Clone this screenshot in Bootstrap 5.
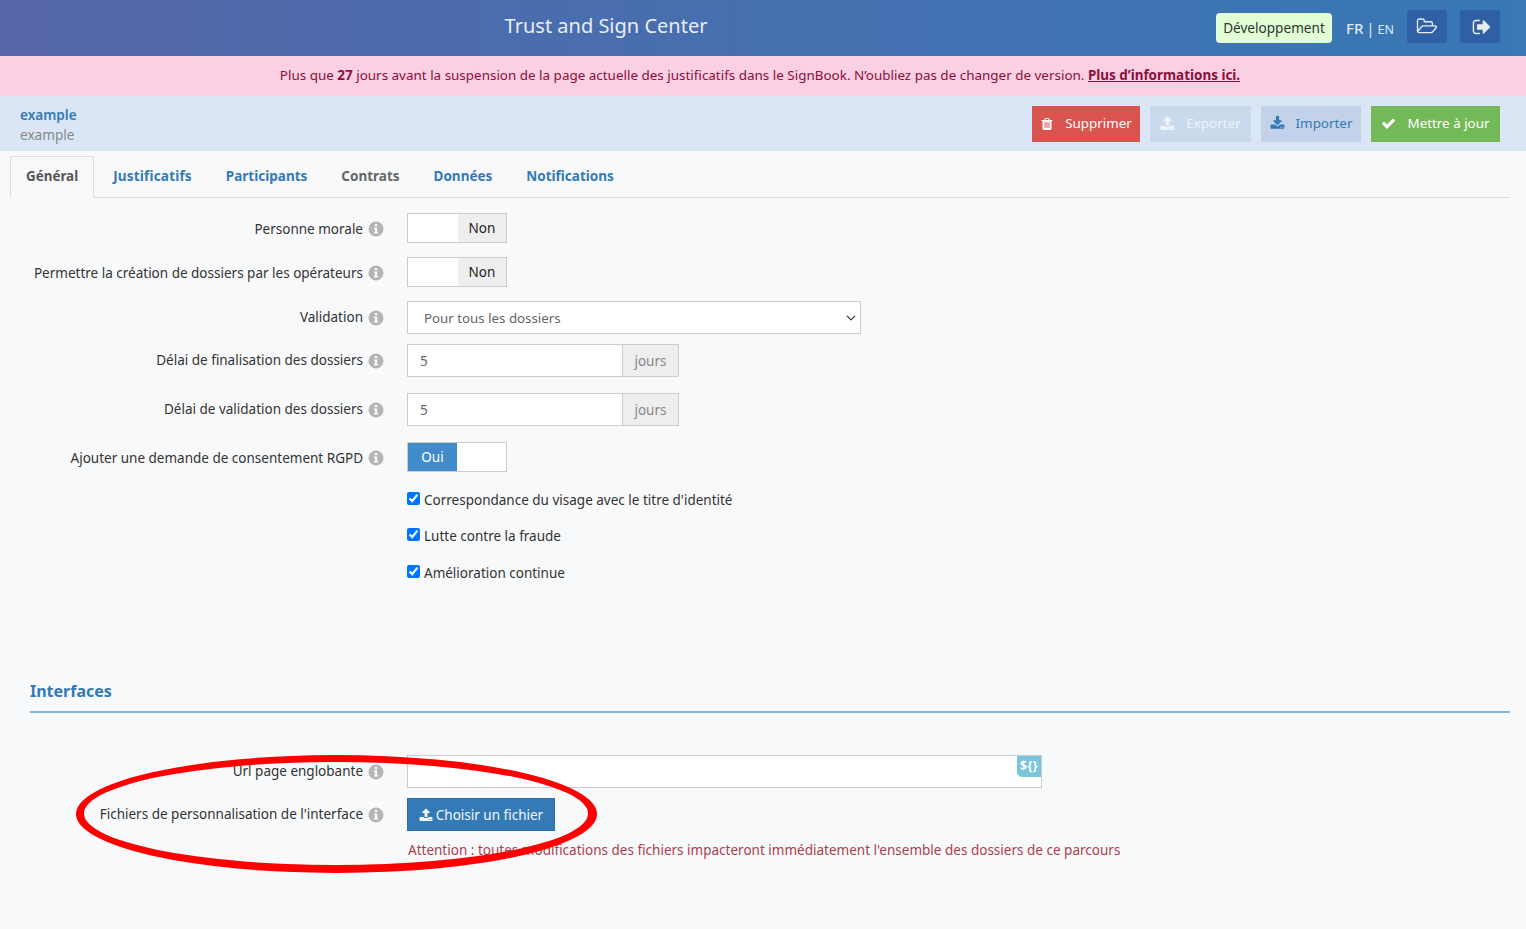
<!DOCTYPE html>
<html lang="fr"><head><meta charset="utf-8"><title>Trust and Sign Center</title>
<link rel="stylesheet" href="https://cdn.jsdelivr.net/npm/bootstrap@5.3.0/dist/css/bootstrap.min.css">
<style>
html,body{height:100%}
body{font-family:"Noto Sans",sans-serif;font-size:13.5px;background:#f8f9fb;color:#333;position:relative;overflow:hidden;display:flex;flex-direction:column}
.ic{fill:currentColor;display:inline-block;flex:none}
.top-bar{height:56px;flex:none;background:linear-gradient(90deg,#5566a9,#3778b5);color:#e8eef6}
.top-title{font-size:20px;padding-bottom:4px}
.top-right{width:314px;padding-right:26px;padding-left:4px}
.env-tag{background:#e0ffd4;color:#333;border-radius:4px;height:30px;line-height:30px;width:116px;text-align:center;font-size:13.6px;margin-right:14px;white-space:nowrap}
.lang{color:#dfe9f5;font-size:15px;width:61px;white-space:nowrap;word-spacing:-1px}
.lang small{font-size:12.5px;margin-left:0}
.top-btn,.top-btn:hover{width:40px;height:33px;background:#2f5fa5;border-radius:3px;color:#e8eef6;border:0;padding:0 0 3px;margin-top:-3px}
.top-btn.out{padding-left:4px}
.warn-bar{height:40px;flex:none;background:#fcd0e3;color:#8b0f3c;font-size:13.44px;padding:0 6px 2px 0}
.warn-bar a{color:#8b0f3c;font-weight:700}
.sub-bar{height:55px;flex:none;background:#dae6f6;padding:0 26px 0 20px}
.sub-names{padding-top:2px}
.sub-name{color:#337ab7;font-weight:600;font-size:13.6px;line-height:20px}
.sub-code{color:#888;font-size:13.6px;line-height:20px}
.act{height:36px;border-radius:0;border:0;font-size:13.4px;padding:0;display:flex;align-items:center;justify-content:center;gap:11px}
.act-group{gap:10px}
.act-del,.act-del:hover{background:#d9534f;width:108px;color:#fff}
.act-exp,.act-exp:hover{background:#cad9ec;width:101px;color:#eef3f9}
.act-imp,.act-imp:hover{background:#c2d3e9;width:100px;color:#337ab7}
.act-ok,.act-ok:hover{background:#74b957;width:129px;color:#fff}
.tabs-zone{margin:5px 16px 0 10px;flex:none}
.tabs-zone .nav-tabs{border-bottom:1px solid #ddd;--bs-nav-tabs-border-radius:2px;height:42px}
.tabs-zone .nav-link{font-weight:700;color:#337ab7;padding:9px 16px;height:42px;font-size:13.5px;border-width:1px;margin-right:0;line-height:20px}
.tabs-zone .nav-link.wide{letter-spacing:.2px}
.tabs-zone .nav-link.dim{color:#666}
.tabs-zone .nav-link.active{color:#555;background:#f8f9fb;border-color:#ddd #ddd #f8f9fb;padding:9px 15px;margin-right:2px;font-size:13.4px}
.form-zone{padding-top:15px;flex:1 1 auto}
.f-row{display:grid;grid-template-columns:383px 1fr;column-gap:24px;align-items:center}
.f-lab{display:flex;justify-content:flex-end;align-items:center;gap:5px;color:#333;margin-right:-1px}
.f-lab.low{padding-top:2px}
.i-dot{width:16px;height:16px;color:#b5b5b5}
.tog{width:100px;height:30px;border:1px solid #ccc;display:flex;background:#fff}
.tog span{flex:1;display:flex;align-items:center;justify-content:center}
.tog .off{flex:none;width:48px;background:#eee;color:#222}
.tog .on{flex:none;width:49px;background:#428bca;color:#fff}
.f-sel{width:454px;height:33px;padding:2px 16px 0;border:1px solid #ccc;border-radius:0;font-size:13.3px;color:#666;background-position:right 4px center;background-size:10px 10px}
.f-inp{width:272px;border-radius:0}
.f-inp .form-control{height:33px;border-radius:0;border-color:#ccc;color:#666;font-size:13.5px;padding:0 12px}
.f-inp .input-group-text{border-radius:0;border-color:#ccc;background:#eee;color:#888;font-size:13.5px;width:57px;justify-content:center;padding:2px 0 0}
.f-chk{margin:0;padding:0;display:flex;align-items:flex-start;gap:4px;color:#333;line-height:20px}
.f-chk input{margin:2px 0 0;width:13px;height:13px;flex:none;accent-color:#0075ff}
.sec-title{margin:0 16px 0 30px;height:32px;border-bottom:2px solid #8ab4d6;color:#337ab7;font-size:16px;font-weight:700;line-height:20px}
.url-box{width:635px;height:33px;border:1px solid #ccc;background:#fff;position:relative}
.var-tag{position:absolute;top:0;right:0;width:24px;height:21px;background:#79c5de;color:#fff;font-size:12px;letter-spacing:.5px;font-weight:700;border-radius:0 0 0 5px;text-align:center;line-height:20px}
.up-btn,.up-btn:hover{width:148px;height:33px;background:#337ab7;color:#f2f6fa;border:1px solid #2e6da4;border-radius:0;padding:1px 0 0;font-size:13.5px;display:flex;align-items:center;justify-content:center;gap:3px}
.note{color:#ab3f4a;font-size:13.53px;line-height:20px;padding-left:1px}
.foot-band{height:27px;flex:none;background:#fafafa}
.ring{position:absolute;left:76px;top:753px;pointer-events:none}
</style></head><body>
<header class="top-bar d-flex align-items-center">
  <div class="flex-grow-1 text-center top-title">Trust and Sign Center</div>
  <div class="top-right d-flex align-items-center">
    <span class="env-tag">Développement</span>
    <span class="lang"><b class="fw-medium">FR</b> | <small>EN</small></span>
    <button class="btn top-btn me-auto" type="button" aria-label="Dossiers"><svg class="ic" width="22" height="19" viewBox="0 0 2048 1792"><path d="M1845 931q0-35-53-35h-1088q-40 0-85.500 21.500t-71.500 52.500l-294 363q-18 24-18 40 0 35 53 35h1088q40 0 86-22t71-53l294-363q18-22 18-40zm-1141-163h768v-160q0-40-28-68t-68-28h-576q-40 0-68-28t-28-68v-64q0-40-28-68t-68-28h-320q-40 0-68 28t-28 68v853l256-315q44-53 116-87.500t140-34.500zm1269 163q0 62-46 120l-295 363q-43 53-116 87.500t-140 34.500h-1088q-92 0-158-66t-66-158v-960q0-92 66-158t158-66h320q92 0 158 66t66 158v32h544q92 0 158 66t66 158v160h192q54 0 99 24.500t67 70.500q15 32 15 68z"/></svg></button>
    <button class="btn top-btn out" type="button" aria-label="Déconnexion"><svg class="ic" width="20" height="20" viewBox="0 0 1792 1792"><path d="M704 1440q0 4 1 20t.5 26.500-3 23.500-10 19.500-20.500 6.500h-320q-119 0-203.500-84.500t-84.500-203.500v-704q0-119 84.500-203.500t203.500-84.500h320q13 0 22.500 9.500t9.500 22.500q0 4 1 20t.5 26.500-3 23.500-10 19.500-20.500 6.500h-320q-66 0-113 47t-47 113v704q0 66 47 113t113 47h312l11.500 1 11.500 3 8 5.500 7 9 2 13.500zm928-544q0 26-19 45l-544 544q-19 19-45 19t-45-19-19-45v-288h-448q-26 0-45-19t-19-45v-384q0-26 19-45t45-19h448v-288q0-26 19-45t45-19 45 19l544 544q19 19 19 45z"/></svg></button>
  </div>
</header>
<div class="warn-bar d-flex align-items-center justify-content-center"><span>Plus que <b>27</b> jours avant la suspension de la page actuelle des justificatifs dans le SignBook. N’oubliez pas de changer de version. <a href="#">Plus d’informations ici.</a></span></div>
<div class="sub-bar d-flex align-items-center justify-content-between">
  <div class="sub-names"><div class="sub-name">example</div><div class="sub-code">example</div></div>
  <div class="d-flex act-group">
    <button class="btn act act-del" type="button"><svg class="ic" width="14" height="14" viewBox="0 0 1792 1792"><path d="M704 1376v-704q0-14-9-23t-23-9h-64q-14 0-23 9t-9 23v704q0 14 9 23t23 9h64q14 0 23-9t9-23zm256 0v-704q0-14-9-23t-23-9h-64q-14 0-23 9t-9 23v704q0 14 9 23t23 9h64q14 0 23-9t9-23zm256 0v-704q0-14-9-23t-23-9h-64q-14 0-23 9t-9 23v704q0 14 9 23t23 9h64q14 0 23-9t9-23zm-544-992h448l-48-117q-7-9-17-11h-317q-10 2-17 11zm928 32v64q0 14-9 23t-23 9h-96v948q0 83-47 143.500t-113 60.500h-832q-66 0-113-58.500t-47-141.500v-952h-96q-14 0-23-9t-9-23v-64q0-14 9-23t23-9h309l70-167q15-37 54-63t79-26h320q40 0 79 26t54 63l70 167h309q14 0 23 9t9 23z"/></svg>Supprimer</button>
    <button class="btn act act-exp" type="button"><svg class="ic" width="15" height="15" viewBox="0 0 1792 1792"><path d="M1344 1472q0-26-19-45t-45-19-45 19-19 45 19 45 45 19 45-19 19-45zm256 0q0-26-19-45t-45-19-45 19-19 45 19 45 45 19 45-19 19-45zm128-224v320q0 40-28 68t-68 28h-1472q-40 0-68-28t-28-68v-320q0-40 28-68t68-28h427q21 56 70.500 92t110.500 36h256q61 0 110.500-36t70.500-92h427q40 0 68 28t28 68zm-325-648q-17 40-59 40h-256v448q0 26-19 45t-45 19h-256q-26 0-45-19t-19-45v-448h-256q-42 0-59-40-17-39 14-69l448-448q18-19 45-19t45 19l448 448q31 30 14 69z"/></svg>Exporter</button>
    <button class="btn act act-imp" type="button"><svg class="ic" width="15" height="15" viewBox="0 0 1792 1792"><path d="M1344 1344q0-26-19-45t-45-19-45 19-19 45 19 45 45 19 45-19 19-45zm256 0q0-26-19-45t-45-19-45 19-19 45 19 45 45 19 45-19 19-45zm128-224v320q0 40-28 68t-68 28h-1472q-40 0-68-28t-28-68v-320q0-40 28-68t68-28h465l135 136q58 56 136 56t136-56l136-136h464q40 0 68 28t28 68zm-325-569q17 41-14 70l-448 448q-18 19-45 19t-45-19l-448-448q-31-29-14-70 17-39 59-39h256v-448q0-26 19-45t45-19h256q26 0 45 19t19 45v448h256q42 0 59 39z"/></svg>Importer</button>
    <button class="btn act act-ok" type="button"><svg class="ic" width="15" height="15" viewBox="0 0 1792 1792"><path d="M1671 566q0 40-28 68l-724 724-136 136q-28 28-68 28t-68-28l-136-136-362-362q-28-28-28-68t28-68l136-136q28-28 68-28t68 28l294 295 656-657q28-28 68-28t68 28l136 136q28 28 28 68z"/></svg>Mettre à jour</button>
  </div>
</div>
<div class="tabs-zone">
  <ul class="nav nav-tabs">
    <li class="nav-item"><a class="nav-link active" href="#">Général</a></li>
    <li class="nav-item"><a class="nav-link wide" href="#">Justificatifs</a></li>
    <li class="nav-item"><a class="nav-link" href="#">Participants</a></li>
    <li class="nav-item"><a class="nav-link dim" href="#">Contrats</a></li>
    <li class="nav-item"><a class="nav-link" href="#">Données</a></li>
    <li class="nav-item"><a class="nav-link" href="#">Notifications</a></li>
  </ul>
</div>
<main class="form-zone d-flex flex-column">
  <div class="f-row"><div class="f-lab low">Personne morale <svg class="ic i-dot"><use href="#inf"/></svg></div><div class="tog"><span></span><span class="off">Non</span></div></div>
  <div class="f-row" style="margin-top:14px"><div class="f-lab low">Permettre la création de dossiers par les opérateurs <svg class="ic i-dot"><use href="#inf"/></svg></div><div class="tog"><span></span><span class="off">Non</span></div></div>
  <div class="f-row" style="margin-top:14px"><div class="f-lab">Validation <svg class="ic i-dot"><use href="#inf"/></svg></div><select class="form-select f-sel"><option>Pour tous les dossiers</option></select></div>
  <div class="f-row" style="margin-top:10px"><div class="f-lab">Délai de finalisation des dossiers <svg class="ic i-dot"><use href="#inf"/></svg></div><div class="input-group f-inp"><input class="form-control" value="5"><span class="input-group-text">jours</span></div></div>
  <div class="f-row" style="margin-top:16px"><div class="f-lab">Délai de validation des dossiers <svg class="ic i-dot"><use href="#inf"/></svg></div><div class="input-group f-inp"><input class="form-control" value="5"><span class="input-group-text">jours</span></div></div>
  <div class="f-row" style="margin-top:16px"><div class="f-lab low">Ajouter une demande de consentement RGPD <svg class="ic i-dot"><use href="#inf"/></svg></div><div class="tog"><span class="on">Oui</span><span></span></div></div>
  <div class="f-row" style="margin-top:18px"><div></div><label class="f-chk"><input type="checkbox" checked>Correspondance du visage avec le titre d'identité</label></div>
  <div class="f-row" style="margin-top:16px"><div></div><label class="f-chk"><input type="checkbox" checked>Lutte contre la fraude</label></div>
  <div class="f-row" style="margin-top:17px"><div></div><label class="f-chk"><input type="checkbox" checked>Amélioration continue</label></div>
  <div class="sec-title" style="margin-top:98px">Interfaces</div>
  <div class="f-row" style="margin-top:42px"><div class="f-lab">Url page englobante <svg class="ic i-dot"><use href="#inf"/></svg></div><div class="url-box"><span class="var-tag">${}</span></div></div>
  <div class="f-row" style="margin-top:10px"><div class="f-lab">Fichiers de personnalisation de l'interface <svg class="ic i-dot"><use href="#inf"/></svg></div><button class="btn up-btn" type="button"><svg class="ic" width="14" height="14" viewBox="0 0 1792 1792"><path d="M1344 1472q0-26-19-45t-45-19-45 19-19 45 19 45 45 19 45-19 19-45zm256 0q0-26-19-45t-45-19-45 19-19 45 19 45 45 19 45-19 19-45zm128-224v320q0 40-28 68t-68 28h-1472q-40 0-68-28t-28-68v-320q0-40 28-68t68-28h427q21 56 70.500 92t110.500 36h256q61 0 110.500-36t70.500-92h427q40 0 68 28t28 68zm-325-648q-17 40-59 40h-256v448q0 26-19 45t-45 19h-256q-26 0-45-19t-19-45v-448h-256q-42 0-59-40-17-39 14-69l448-448q18-19 45-19t45 19l448 448q31 30 14 69z"/></svg>Choisir un fichier</button></div>
  <div class="f-row" style="margin-top:9px"><div></div><div class="note">Attention : toutes modifications des fichiers impacteront immédiatement l'ensemble des dossiers de ce parcours</div></div>
</main>
<div class="foot-band"></div>
<svg class="ring" width="524" height="124" viewBox="0 0 524 124" aria-hidden="true"><path fill="#f00" fill-rule="evenodd" d="M0 61a260.500 59 0 1 0 521 0a260.500 59 0 1 0-521 0zM8 60.500a252 51.500 0 1 1 504 0a252 51.500 0 1 1-504 0z"/></svg>
<svg width="0" height="0" class="position-absolute" aria-hidden="true"><defs><symbol id="inf" viewBox="0 0 16 16"><path fill-rule="evenodd" d="M8 .5a7.500 7.500 0 1 0 0 15 7.500 7.500 0 0 0 0-15zM6.800 3h2.400v2.200H6.800zM6 6.500h3.200V11H10v1.600H6V11h.9V8.100H6z"/></symbol></defs></svg>
</body></html>
